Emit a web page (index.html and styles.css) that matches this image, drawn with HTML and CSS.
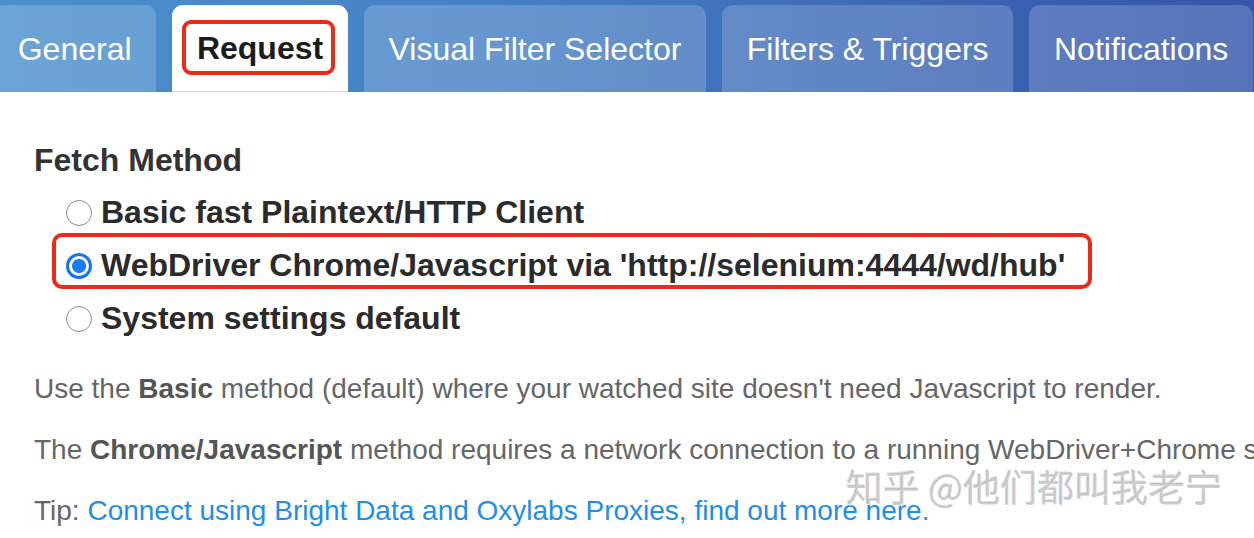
FILE: index.html
```html
<!DOCTYPE html>
<html>
<head>
<meta charset="utf-8">
<link rel="stylesheet" href="styles.css">
</head>
<body>
<div class="page">
  <nav class="tabs">
    <div class="tab tab-first">General</div>
    <div class="tab tab-active"><span class="mark">Request</span></div>
    <div class="tab">Visual Filter Selector</div>
    <div class="tab">Filters &amp; Triggers</div>
    <div class="tab">Notifications</div>
  </nav>
  <main class="content">
    <h2 class="heading">Fetch Method</h2>
    <ul class="options">
      <li class="option"><span class="radio"></span>Basic fast Plaintext/HTTP Client</li>
      <li class="option option-marked"><span class="radio radio-on"></span>WebDriver Chrome/Javascript via 'http://selenium:4444/wd/hub'</li>
      <li class="option"><span class="radio"></span>System settings default</li>
    </ul>
    <p class="note">Use the <strong>Basic</strong> method (default) where your watched site doesn't need Javascript to render.</p>
    <p class="note">The <strong>Chrome/Javascript</strong> method requires a network connection to a running WebDriver+Chrome server, set by the ENV var 'WEBDRIVER_URL'.</p>
    <p class="note">Tip: <a class="link" href="#">Connect using Bright Data and Oxylabs Proxies, find out more here.</a></p>
  </main>
  <div class="watermark">知乎 @他们都叫我老宁</div>
</div>
</body>
</html>
```
FILE: styles.css
```css
html, body {
  margin: 0;
  padding: 0;
  background: #fff;
}
.page {
  position: relative;
  width: 1254px;
  height: 538px;
  overflow: hidden;
  font-family: "Liberation Sans", Arial, sans-serif;
}
.tabs {
  display: flex;
  gap: 16px;
  height: 92px;
  box-sizing: border-box;
  padding-top: 5px;
  background: linear-gradient(to right, #4b90cd 0%, #4580c4 40%, #3a62b2 80%, #3455aa 100%);
  white-space: nowrap;
}
.tab {
  display: flex;
  align-items: center;
  flex: none;
  padding: 0 24.7px;
  border-radius: 11px 11px 0 0;
  background: rgba(255, 255, 255, 0.18);
  color: #fff;
  font-size: 32px;
  line-height: 1;
}
.tab-first {
  margin-left: -7px;
}
.tab-active {
  background: #fff;
  color: #1c1c1c;
  font-weight: bold;
  border-bottom: 1px solid #d9d9d9;
}
.mark {
  position: relative;
}
.mark::after {
  content: "";
  position: absolute;
  left: -15px;
  right: -12px;
  top: -12px;
  bottom: -11px;
  border: 4px solid #ea2a1a;
  border-radius: 9px;
}
.content {
  padding: 0 0 0 34px;
  color: #333;
}
.heading {
  margin: 0;
  padding-top: 52px;
  font-size: 32px;
  line-height: 32px;
  font-weight: bold;
  color: #333;
}
.options {
  list-style: none;
  margin: 10px 0 0 32px;
  padding: 0;
}
.option {
  position: relative;
  display: flex;
  align-items: center;
  height: 53px;
  font-size: 32px;
  font-weight: bold;
  color: #2b2b2b;
  white-space: nowrap;
}
.option-marked::after {
  content: "";
  position: absolute;
  left: -14px;
  top: -6px;
  width: 1040px;
  height: 56px;
  box-sizing: border-box;
  border: 4px solid #ea2a1a;
  border-radius: 10px;
}
.radio {
  flex: none;
  width: 26px;
  height: 26px;
  box-sizing: border-box;
  border: 1.5px solid #8a8a8a;
  border-radius: 50%;
  margin-right: 9px;
  background: #fff;
}
.radio-on {
  border: 3px solid #1474ee;
  background: radial-gradient(circle, #1a7cf5 0 6.5px, #fff 7.5px);
}
.note {
  margin: 0;
  height: 61px;
  line-height: 61px;
  font-size: 28px;
  color: #666;
  white-space: nowrap;
}
.options + .note {
  margin-top: 13px;
}
.note strong {
  color: #555;
}
.link {
  color: #1f8ee6;
  text-decoration: none;
}
.watermark {
  position: absolute;
  left: 846px;
  top: 466px;
  font-family: "Noto Sans CJK SC", sans-serif;
  font-size: 37px;
  line-height: 40px;
  color: rgba(160, 160, 160, 0.5);
  text-shadow: 1px 1px 0 rgba(255, 255, 255, 0.8), -1px -1px 0 rgba(120, 120, 120, 0.22);
  white-space: nowrap;
}
```
